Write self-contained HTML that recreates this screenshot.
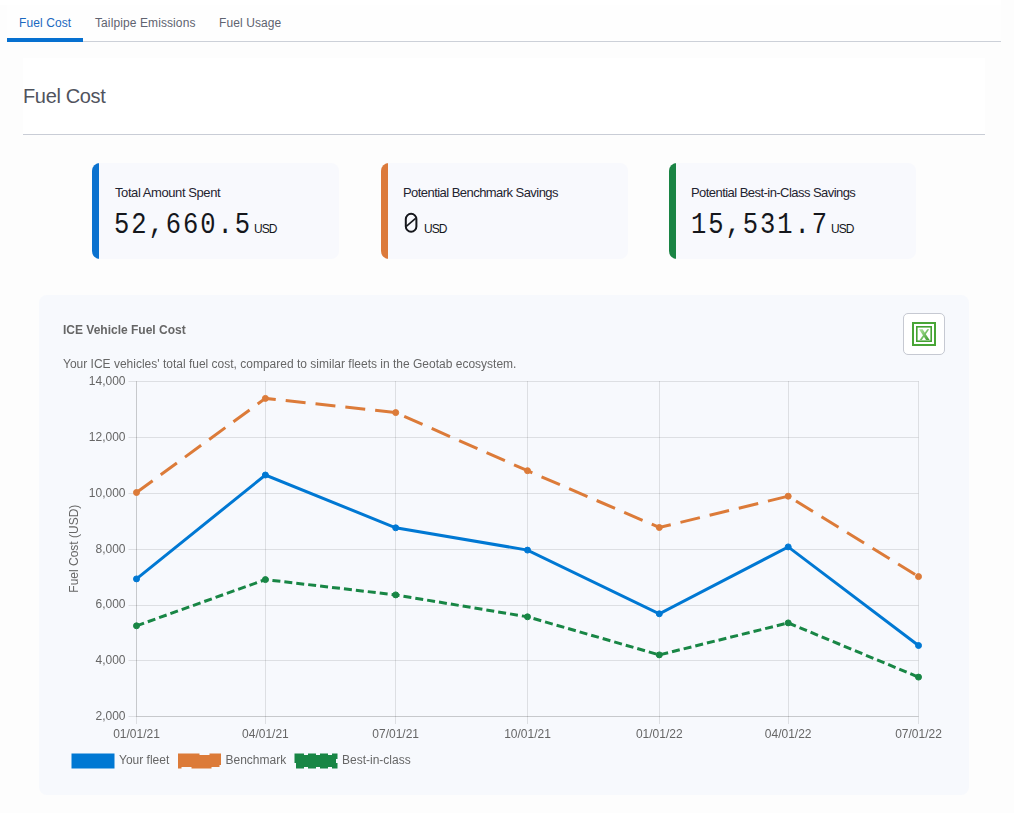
<!DOCTYPE html>
<html><head><meta charset="utf-8">
<style>
html,body{margin:0;padding:0;}
body{width:1014px;height:813px;overflow:hidden;background:#fdfdfd;position:relative;font-family:"Liberation Sans",sans-serif;}
.abs{position:absolute;}
#tabs{left:7px;top:5px;width:994px;height:36px;background:#fefefe;border-bottom:1px solid #ccd0d8;}
.tab{position:absolute;top:11px;font-size:12px;line-height:14px;color:#5f6370;letter-spacing:0.1px;white-space:nowrap;}
#ul{left:7px;top:38px;width:76px;height:4px;background:#0670d0;}
#hdr{left:23px;top:58px;width:962px;height:76px;background:#fff;border-bottom:1px solid #c9cdd6;}
#hdr .t{position:absolute;left:0px;top:26px;font-size:20px;line-height:24px;color:#50535d;letter-spacing:-0.35px;white-space:nowrap;}
.kpi{position:absolute;top:163px;width:247px;height:96px;background:#f8f9fd;border-radius:8px;overflow:hidden;}
.kpi .bar{position:absolute;left:0;top:0;width:7px;height:96px;}
.kpi .lbl{position:absolute;left:22px;top:22px;font-size:13px;line-height:16px;color:#1f2430;white-space:nowrap;letter-spacing:-0.55px;}
.kpi .val{position:absolute;left:22px;top:45px;font-family:"Liberation Mono",monospace;font-size:30px;line-height:34px;letter-spacing:2.3px;color:#15171c;white-space:nowrap;transform:scaleX(0.85);transform-origin:0 0;}
.kpi .usd{position:absolute;top:40px;line-height:34px;font-family:"Liberation Sans",sans-serif;font-size:12px;letter-spacing:-0.9px;color:#15171c;white-space:nowrap;}
.kpi .usd::before{content:"";display:inline-block;height:30px;}
#card{left:39px;top:295px;width:930px;height:500px;background:#f7f9fd;border-radius:8px;}
.ct{font-size:12px;line-height:14px;color:#666;white-space:nowrap;will-change:transform;}
#xl{left:903px;top:313px;width:40px;height:40px;background:#fff;border:1px solid #c6c9d2;border-radius:5px;}
</style></head>
<body>
<div id="topstrip" class="abs" style="left:0;top:0;width:1001px;height:5px;background:#fff;"></div>
<div id="tabs" class="abs">
  <div class="tab" style="left:12px;color:#1b68c0;">Fuel Cost</div>
  <div class="tab" style="left:88px;">Tailpipe Emissions</div>
  <div class="tab" style="left:212px;">Fuel Usage</div>
</div>
<div id="ul" class="abs"></div>
<div id="hdr" class="abs"><div class="t">Fuel Cost</div></div>

<div class="kpi" style="left:92px;border-left-color:#0a72cf;"><div class="bar" style="background:#0b72cf"></div><div class="lbl" style="left:23px;letter-spacing:-0.42px">Total Amount Spent</div><div class="val">52,660.5</div><div class="usd" style="left:162px">USD</div></div>
<div class="kpi" style="left:381px;border-left-color:#dc7a3b;"><div class="bar" style="background:#dc7a3b"></div><div class="lbl">Potential Benchmark Savings</div><div class="usd" style="left:43px">USD</div><svg style="position:absolute;left:0px;top:0" width="60" height="96"><rect x="24.8" y="50.8" width="10.6" height="17.9" rx="5.3" ry="5.3" fill="none" stroke="#15171c" stroke-width="2"/><line x1="25.3" y1="63.4" x2="34.6" y2="55.4" stroke="#15171c" stroke-width="1.6"/></svg></div>
<div class="kpi" style="left:669px;border-left-color:#1a8444;"><div class="bar" style="background:#1a8444"></div><div class="lbl">Potential Best-in-Class Savings</div><div class="val">15,531.7</div><div class="usd" style="left:162px">USD</div></div>

<div id="card" class="abs"></div>
<div class="abs ct" style="left:63px;top:323px;font-weight:bold;">ICE Vehicle Fuel Cost</div>
<div class="abs ct" style="left:63px;top:357px;">Your ICE vehicles' total fuel cost, compared to similar fleets in the Geotab ecosystem.</div>
<div id="xl" class="abs"><svg width="40" height="40" viewBox="0 0 40 40" style="position:absolute;left:0;top:0">
<defs><linearGradient id="xg" x1="0" y1="0" x2="1" y2="1"><stop offset="0" stop-color="#b2e6a0"/><stop offset="1" stop-color="#3a9a2c"/></linearGradient></defs>
<rect x="9" y="9" width="22" height="22" fill="none" stroke="#48a536" stroke-width="2"/>
<rect x="12.8" y="12.8" width="14.4" height="14.4" fill="none" stroke="#45a233" stroke-width="1.6"/>
<path d="M15,15.2 L18.6,15.2 L25.6,26 L22,26 Z" fill="url(#xg)"/>
<path d="M23.2,15.2 L25.2,15.2 L17.8,26 L15.6,26 Z" fill="url(#xg)"/>
</svg></div>

<svg class="abs" style="left:0;top:0;will-change:transform" width="1014" height="813" viewBox="0 0 1014 813">
<g id="chart" font-family="Liberation Sans, sans-serif" font-size="12" fill="#666">
<line x1="136.5" y1="381" x2="136.5" y2="724" stroke="rgba(0,0,0,0.1)" stroke-width="1"/>
<line x1="265.5" y1="381" x2="265.5" y2="724" stroke="rgba(0,0,0,0.1)" stroke-width="1"/>
<line x1="395.5" y1="381" x2="395.5" y2="724" stroke="rgba(0,0,0,0.1)" stroke-width="1"/>
<line x1="527.5" y1="381" x2="527.5" y2="724" stroke="rgba(0,0,0,0.1)" stroke-width="1"/>
<line x1="659.5" y1="381" x2="659.5" y2="724" stroke="rgba(0,0,0,0.1)" stroke-width="1"/>
<line x1="788.5" y1="381" x2="788.5" y2="724" stroke="rgba(0,0,0,0.1)" stroke-width="1"/>
<line x1="918.5" y1="381" x2="918.5" y2="724" stroke="rgba(0,0,0,0.1)" stroke-width="1"/>
<line x1="128.5" y1="381.5" x2="918.5" y2="381.5" stroke="rgba(0,0,0,0.1)" stroke-width="1"/>
<line x1="128.5" y1="437.5" x2="918.5" y2="437.5" stroke="rgba(0,0,0,0.1)" stroke-width="1"/>
<line x1="128.5" y1="493.5" x2="918.5" y2="493.5" stroke="rgba(0,0,0,0.1)" stroke-width="1"/>
<line x1="128.5" y1="549.5" x2="918.5" y2="549.5" stroke="rgba(0,0,0,0.1)" stroke-width="1"/>
<line x1="128.5" y1="605.5" x2="918.5" y2="605.5" stroke="rgba(0,0,0,0.1)" stroke-width="1"/>
<line x1="128.5" y1="660.5" x2="918.5" y2="660.5" stroke="rgba(0,0,0,0.1)" stroke-width="1"/>
<line x1="128.5" y1="716.5" x2="918.5" y2="716.5" stroke="rgba(0,0,0,0.1)" stroke-width="1"/>
<line x1="136.5" y1="381.5" x2="136.5" y2="716.5" stroke="rgba(0,0,0,0.1)" stroke-width="1"/>
<line x1="136.5" y1="716.5" x2="918.5" y2="716.5" stroke="rgba(0,0,0,0.1)" stroke-width="1"/>
<text x="125.5" y="384.9" text-anchor="end">14,000</text>
<text x="125.5" y="440.8" text-anchor="end">12,000</text>
<text x="125.5" y="496.6" text-anchor="end">10,000</text>
<text x="125.5" y="552.5" text-anchor="end">8,000</text>
<text x="125.5" y="608.3" text-anchor="end">6,000</text>
<text x="125.5" y="664.1" text-anchor="end">4,000</text>
<text x="125.5" y="720.0" text-anchor="end">2,000</text>
<text x="136.5" y="738" text-anchor="middle">01/01/21</text>
<text x="265.4" y="738" text-anchor="middle">04/01/21</text>
<text x="395.7" y="738" text-anchor="middle">07/01/21</text>
<text x="527.5" y="738" text-anchor="middle">10/01/21</text>
<text x="659.3" y="738" text-anchor="middle">01/01/22</text>
<text x="788.2" y="738" text-anchor="middle">04/01/22</text>
<text x="918.5" y="738" text-anchor="middle">07/01/22</text>
<text transform="translate(78.4,548.7) rotate(-90)" text-anchor="middle">Fuel Cost (USD)</text>
<polyline points="136.5,625.8 265.4,579.6 395.7,594.9 527.5,616.8 659.3,654.9 788.2,622.9 918.5,677.1" fill="none" stroke="#188645" stroke-width="3" stroke-dasharray="8 4" stroke-linejoin="miter"/>
<circle cx="136.5" cy="625.8" r="3" fill="#188645" stroke="#188645" stroke-width="1"/>
<circle cx="265.4" cy="579.6" r="3" fill="#188645" stroke="#188645" stroke-width="1"/>
<circle cx="395.7" cy="594.9" r="3" fill="#188645" stroke="#188645" stroke-width="1"/>
<circle cx="527.5" cy="616.8" r="3" fill="#188645" stroke="#188645" stroke-width="1"/>
<circle cx="659.3" cy="654.9" r="3" fill="#188645" stroke="#188645" stroke-width="1"/>
<circle cx="788.2" cy="622.9" r="3" fill="#188645" stroke="#188645" stroke-width="1"/>
<circle cx="918.5" cy="677.1" r="3" fill="#188645" stroke="#188645" stroke-width="1"/>
<polyline points="136.5,492.5 265.4,398.4 395.7,412.6 527.5,470.7 659.3,527.5 788.2,496.2 918.5,576.6" fill="none" stroke="#dc7b39" stroke-width="3" stroke-dasharray="20 10" stroke-linejoin="miter"/>
<circle cx="136.5" cy="492.5" r="3" fill="#dc7b39" stroke="#dc7b39" stroke-width="1"/>
<circle cx="265.4" cy="398.4" r="3" fill="#dc7b39" stroke="#dc7b39" stroke-width="1"/>
<circle cx="395.7" cy="412.6" r="3" fill="#dc7b39" stroke="#dc7b39" stroke-width="1"/>
<circle cx="527.5" cy="470.7" r="3" fill="#dc7b39" stroke="#dc7b39" stroke-width="1"/>
<circle cx="659.3" cy="527.5" r="3" fill="#dc7b39" stroke="#dc7b39" stroke-width="1"/>
<circle cx="788.2" cy="496.2" r="3" fill="#dc7b39" stroke="#dc7b39" stroke-width="1"/>
<circle cx="918.5" cy="576.6" r="3" fill="#dc7b39" stroke="#dc7b39" stroke-width="1"/>
<polyline points="136.5,578.9 265.4,475.0 395.7,527.8 527.5,550.1 659.3,613.8 788.2,546.9 918.5,645.5" fill="none" stroke="#0078d3" stroke-width="3" stroke-linejoin="miter"/>
<circle cx="136.5" cy="578.9" r="3" fill="#0078d3" stroke="#0078d3" stroke-width="1"/>
<circle cx="265.4" cy="475.0" r="3" fill="#0078d3" stroke="#0078d3" stroke-width="1"/>
<circle cx="395.7" cy="527.8" r="3" fill="#0078d3" stroke="#0078d3" stroke-width="1"/>
<circle cx="527.5" cy="550.1" r="3" fill="#0078d3" stroke="#0078d3" stroke-width="1"/>
<circle cx="659.3" cy="613.8" r="3" fill="#0078d3" stroke="#0078d3" stroke-width="1"/>
<circle cx="788.2" cy="546.9" r="3" fill="#0078d3" stroke="#0078d3" stroke-width="1"/>
<circle cx="918.5" cy="645.5" r="3" fill="#0078d3" stroke="#0078d3" stroke-width="1"/>
<rect x="73" y="755" width="40" height="12" fill="#0078d3"/>
<rect x="73" y="755" width="40" height="12" fill="none" stroke="#0078d3" stroke-width="3"/>
<text x="119" y="763.8">Your fleet</text>
<rect x="179.5" y="755" width="40" height="12" fill="#dc7b39"/>
<rect x="179.5" y="755" width="40" height="12" fill="none" stroke="#dc7b39" stroke-width="3" stroke-dasharray="20 10"/>
<text x="225.5" y="763.8">Benchmark</text>
<rect x="296" y="755" width="40" height="12" fill="#188645"/>
<rect x="296" y="755" width="40" height="12" fill="none" stroke="#188645" stroke-width="3" stroke-dasharray="8 4"/>
<text x="342" y="763.8">Best-in-class</text>
</g><!--endchart-->
</svg>
</body></html>
